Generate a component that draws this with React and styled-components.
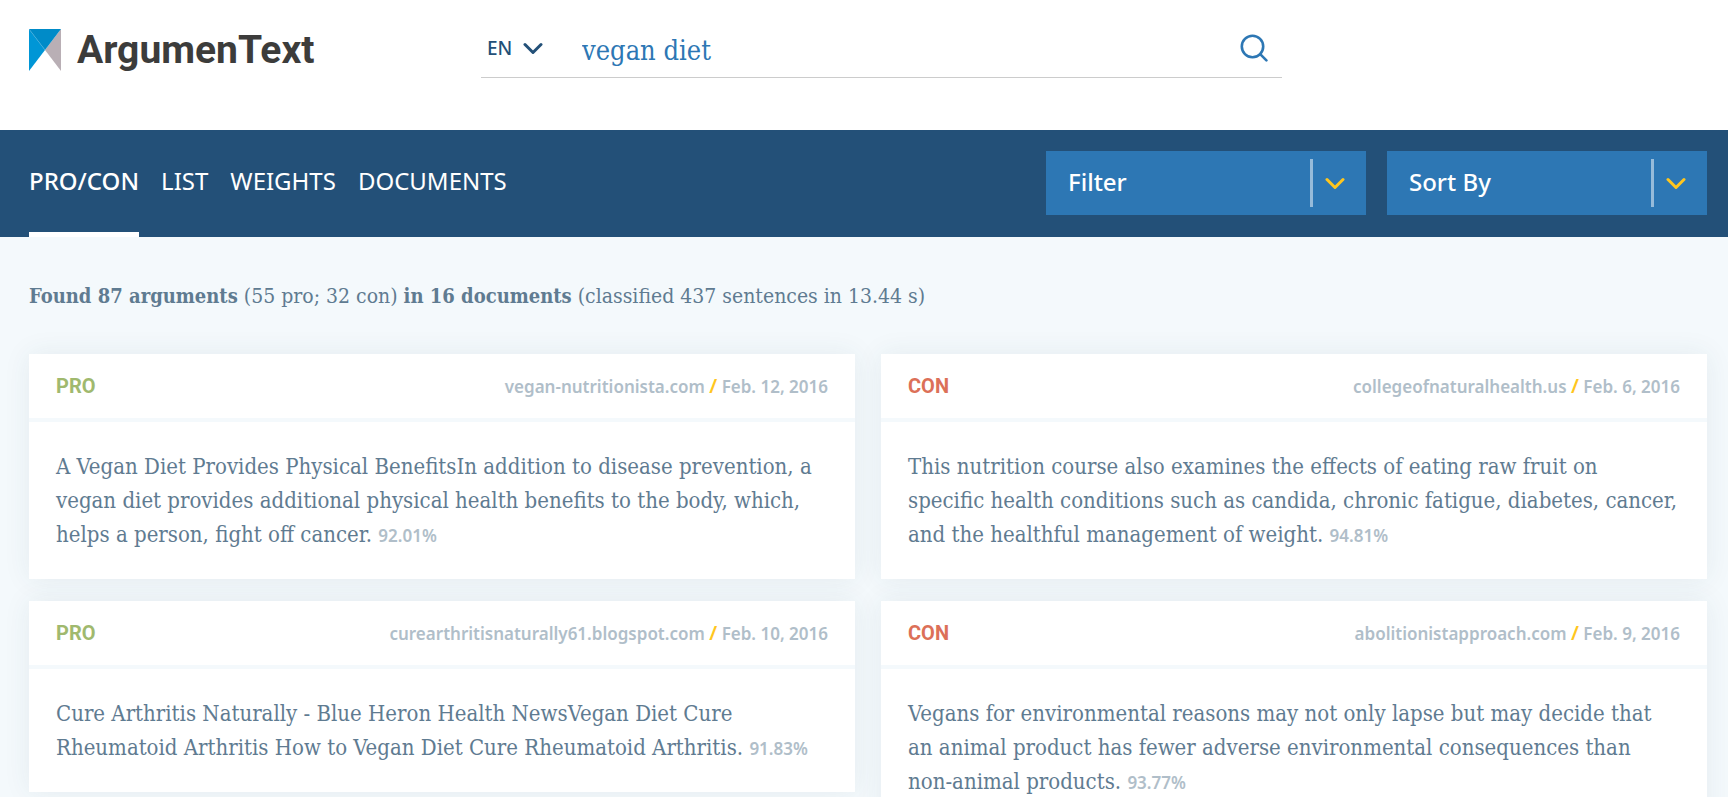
import React from 'react';
import styled, { createGlobalStyle } from 'styled-components';

const sans = '"Noto Sans", sans-serif';
const slab = '"DejaVu Serif Condensed", "DejaVu Serif", serif';

const colors = {
  navy: '#235078',
  blue: '#2d77b4',
  pale: '#f4f9fc',
  text: '#5f7b91',
  muted: '#b0bec9',
  yellow: '#ffc61e',
  pro: '#a0b96e',
  con: '#dc7058',
};

const GlobalStyle = createGlobalStyle`
  *, *::before, *::after { box-sizing: border-box; }
  body {
    margin: 0;
    background: ${colors.pale};
    color: ${colors.text};
    font-family: ${slab};
  }
`;

const Header = styled.header`
  display: grid;
  grid-template-columns: 452px minmax(0, 1fr) 425px;
  height: 130px;
  padding: 0 21px 0 29px;
  background: #fff;
`;

const Logo = styled.a`
  display: flex;
  align-items: center;
  gap: 16px;
  height: 42px;
  margin-top: 29px;
  color: #3c3c3b;
  font: 700 39px/42px Roboto, sans-serif;
  text-decoration: none;
`;

const LogoMark = styled.svg`
  display: block;
  width: 32px;
  height: 42px;
`;

const SearchForm = styled.form`
  display: flex;
  align-items: center;
  height: 78px;
  padding: 19px 14px 0 6px;
  border-bottom: 1px solid #ccc;
`;

const SelectShell = styled.span`
  display: flex;
  align-items: center;
  color: ${colors.navy};
`;

const LanguageSelect = styled.select`
  appearance: none;
  width: 36px;
  height: 34px;
  padding: 0;
  border: 0;
  background: transparent;
  color: inherit;
  font: 500 19px/34px ${sans};
`;

const SearchInput = styled.input`
  flex: 1;
  min-width: 0;
  height: 44px;
  margin: 6px 0 0 39px;
  padding: 0;
  border: 0;
  outline: 0;
  background: transparent;
  color: ${colors.blue};
  font: 27px/44px ${slab};
`;

const SearchButton = styled.button`
  display: flex;
  padding: 0;
  border: 0;
  background: transparent;
  color: ${colors.blue};
  cursor: pointer;
`;

const Toolbar = styled.div`
  display: flex;
  justify-content: space-between;
  height: 107px;
  padding: 0 21px 0 29px;
  background: ${colors.navy};
`;

const Tabs = styled.nav`
  display: flex;
  gap: 22px;
`;

const Tab = styled.a`
  border-bottom: 5px solid ${(p) => (p.$active ? '#fff' : 'transparent')};
  color: #fff;
  font: ${(p) => (p.$active ? 500 : 400)} 24px/102px ${sans};
  text-decoration: none;
`;

const Dropdowns = styled.div`
  display: flex;
  gap: 21px;
  padding-top: 21px;
`;

const Dropdown = styled.label`
  display: grid;
  grid-template-columns: 1fr 56px;
  align-items: center;
  width: 320px;
  height: 64px;
  background: ${colors.blue};
  color: ${colors.yellow};
`;

const DropdownSelect = styled.select`
  grid-area: 1 / 1 / 2 / 3;
  appearance: none;
  width: 100%;
  height: 64px;
  padding: 0 0 2px 22px;
  border: 0;
  background: transparent;
  color: #fff;
  font: 500 24px/60px ${sans};
`;

const DropdownArrow = styled.span`
  grid-area: 1 / 2;
  display: flex;
  align-items: center;
  height: 48px;
  padding-left: 12px;
  border-left: 3px solid #96bbda;
  pointer-events: none;
`;

const Main = styled.main`
  padding: 42px 21px 22px 29px;
`;

const Summary = styled.p`
  margin: 0 0 41px;
  font-size: 21px;
  line-height: 34px;
`;

const Strong = styled.strong`
  font-size: 20px;
`;

const Columns = styled.div`
  display: grid;
  grid-template-columns: repeat(2, minmax(0, 1fr));
  gap: 26px;
`;

const Column = styled.section`
  display: flex;
  flex-direction: column;
  gap: 22px;
`;

const Card = styled.article`
  background: #fff;
  box-shadow: 0 0 26px rgba(35, 80, 90, 0.08);
`;

const CardHeader = styled.header`
  display: flex;
  align-items: center;
  justify-content: space-between;
  height: 68px;
  padding: 0 27px;
  border-bottom: 4px solid ${colors.pale};
`;

const Stance = styled.h2`
  margin: 0;
  color: ${(p) => colors[p.$stance]};
  font: 700 20px/32px Roboto, sans-serif;
  text-transform: uppercase;
`;

const Source = styled.div`
  color: ${colors.muted};
  font: 600 17px/32px ${sans};
`;

const SourceLink = styled.a`
  color: inherit;
  text-decoration: none;
`;

const Slash = styled.span`
  color: ${colors.yellow};
  font-size: 20px;
`;

const CardText = styled.p`
  margin: 0;
  padding: 28px 29px 27px 27px;
  font-size: 22px;
  line-height: 34px;
`;

const Score = styled.span`
  color: ${colors.muted};
  font: 600 17px/20px ${sans};
`;

const NoBreak = styled.span`
  white-space: nowrap;
`;

const Chevron = () => (
  <svg width="20" height="13" viewBox="0 0 20 13" fill="none" stroke="currentColor" strokeWidth="3" strokeLinecap="round" strokeLinejoin="round" aria-hidden="true">
    <path d="M2 2.5l8 8 8-8" />
  </svg>
);

const columns = [
  {
    stance: 'pro',
    items: [
      {
        site: 'vegan-nutritionista.com',
        date: 'Feb. 12, 2016',
        text: 'A Vegan Diet Provides Physical BenefitsIn addition to disease prevention, a vegan diet provides additional physical health benefits to the body, which, helps a person, fight off cancer.',
        score: '92.01%',
      },
      {
        site: 'curearthritisnaturally61.blogspot.com',
        date: 'Feb. 10, 2016',
        text: 'Cure Arthritis Naturally - Blue Heron Health NewsVegan Diet Cure Rheumatoid Arthritis How to Vegan Diet Cure Rheumatoid Arthritis.',
        score: '91.83%',
      },
    ],
  },
  {
    stance: 'con',
    items: [
      {
        site: 'collegeofnaturalhealth.us',
        date: 'Feb. 6, 2016',
        text: 'This nutrition course also examines the effects of eating raw fruit on specific health conditions such as candida, chronic fatigue, diabetes, cancer, and the healthful management of weight.',
        score: '94.81%',
      },
      {
        site: 'abolitionistapproach.com',
        date: 'Feb. 9, 2016',
        text: (
          <>
            Vegans for environmental reasons may not only lapse but may decide that an animal product has fewer adverse
            environmental consequences than <NoBreak>non-animal</NoBreak> products.
          </>
        ),
        score: '93.77%',
      },
    ],
  },
];

const tabs = ['PRO/CON', 'LIST', 'WEIGHTS', 'DOCUMENTS'];

export default function App() {
  return (
    <>
      <GlobalStyle />
      <Header>
        <Logo href="#">
          <LogoMark viewBox="0 0 32 42" aria-hidden="true">
            <path d="M32 0v42L16 21z" fill="#b9afb5" />
            <path d="M0 0v42l16-21z" fill="#0096d6" />
            <path d="M0 0h32L16 21z" fill="#008bc8" />
            <path d="M0 0l16 21" stroke="#4db1dd" strokeWidth="0.5" />
          </LogoMark>
          ArgumenText
        </Logo>
        <SearchForm role="search" onSubmit={(e) => e.preventDefault()}>
          <SelectShell>
            <LanguageSelect aria-label="Language" defaultValue="EN">
              <option>EN</option>
            </LanguageSelect>
            <Chevron />
          </SelectShell>
          <SearchInput aria-label="Search topic" defaultValue="vegan diet" />
          <SearchButton type="submit" aria-label="Search">
            <svg width="28" height="28" viewBox="0 0 28 28" fill="none" stroke="currentColor" strokeWidth="2.6" strokeLinecap="round" aria-hidden="true">
              <circle cx="12.5" cy="12.5" r="10.7" />
              <path d="M20.2 20.2l6.2 6.2" />
            </svg>
          </SearchButton>
        </SearchForm>
      </Header>
      <Toolbar>
        <Tabs aria-label="Views">
          {tabs.map((tab, i) => (
            <Tab key={tab} href="#" $active={i === 0}>{tab}</Tab>
          ))}
        </Tabs>
        <Dropdowns>
          {['Filter', 'Sort By'].map((name) => (
            <Dropdown key={name}>
              <DropdownSelect aria-label={name} defaultValue={name}>
                <option>{name}</option>
              </DropdownSelect>
              <DropdownArrow><Chevron /></DropdownArrow>
            </Dropdown>
          ))}
        </Dropdowns>
      </Toolbar>
      <Main>
        <Summary>
          <Strong>Found 87 arguments</Strong> (55 pro; 32 con) <Strong>in 16 documents</Strong> (classified 437 sentences in 13.44 s)
        </Summary>
        <Columns>
          {columns.map(({ stance, items }) => (
            <Column key={stance}>
              {items.map((item) => (
                <Card key={item.site}>
                  <CardHeader>
                    <Stance $stance={stance}>{stance}</Stance>
                    <Source>
                      <SourceLink href="#">{item.site}</SourceLink> <Slash>/</Slash> {item.date}
                    </Source>
                  </CardHeader>
                  <CardText>
                    {item.text} <Score>{item.score}</Score>
                  </CardText>
                </Card>
              ))}
            </Column>
          ))}
        </Columns>
      </Main>
    </>
  );
}
